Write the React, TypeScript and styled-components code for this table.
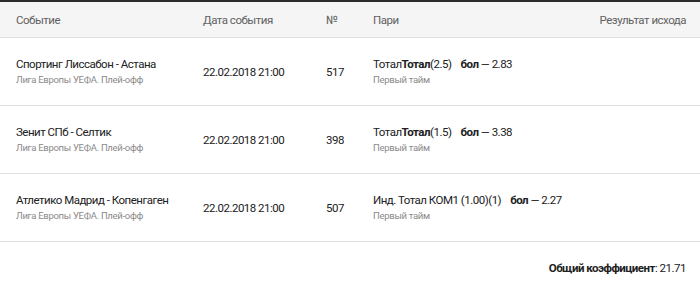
import styled, { createGlobalStyle } from 'styled-components'

const GlobalStyle = createGlobalStyle`
  html, body {
    margin: 0;
    padding: 0;
    background: #ffffff;
  }
  body {
    font-family: Roboto, 'Liberation Sans', Arial, sans-serif;
    color: #212121;
  }
`

interface Bet {
  title: string
  league: string
  date: string
  num: string
  market: React.ReactNode
  odds: string
}

const BETS: Bet[] = [
  {
    title: 'Спортинг Лиссабон - Астана',
    league: 'Лига Европы УЕФА. Плей-офф',
    date: '22.02.2018 21:00',
    num: '517',
    market: (
      <>
        Тотал<b>Тотал</b>(2.5)
      </>
    ),
    odds: '2.83'
  },
  {
    title: 'Зенит СПб - Селтик',
    league: 'Лига Европы УЕФА. Плей-офф',
    date: '22.02.2018 21:00',
    num: '398',
    market: (
      <>
        Тотал<b>Тотал</b>(1.5)
      </>
    ),
    odds: '3.38'
  },
  {
    title: 'Атлетико Мадрид - Копенгаген',
    league: 'Лига Европы УЕФА. Плей-офф',
    date: '22.02.2018 21:00',
    num: '507',
    market: <>Инд. Тотал КОМ1 (1.00)(1)</>,
    odds: '2.27'
  }
]

export default function App() {
  return (
    <Page>
      <GlobalStyle />
      <HeaderRow>
        <HeadCell>Событие</HeadCell>
        <HeadCell>Дата события</HeadCell>
        <HeadCell>№</HeadCell>
        <HeadCell>Пари</HeadCell>
        <HeadCell $right>Результат исхода</HeadCell>
      </HeaderRow>
      {BETS.map(bet => (
        <Row key={bet.num}>
          <Cell>
            <Title>{bet.title}</Title>
            <Sub>{bet.league}</Sub>
          </Cell>
          <Plain>{bet.date}</Plain>
          <Plain>{bet.num}</Plain>
          <Cell>
            <Title>
              {bet.market}
              <Outcome>
                <b>бол</b> — {bet.odds}
              </Outcome>
            </Title>
            <Sub>Первый тайм</Sub>
          </Cell>
          <Cell />
        </Row>
      ))}
      <Footer>
        <b>Общий коэффициент</b>: 21.71
      </Footer>
    </Page>
  )
}

const Page = styled.div`
  width: 700px;
  border-top: 2px solid #2b2b2b;
`

const HeaderRow = styled.div`
  display: grid;
  grid-template-columns: 187px 123px 47px 1fr auto;
  align-items: center;
  height: 34px;
  padding: 1px 14px 0 16px;
  background: #f5f5f5;
  border-bottom: 1px solid #e0e0e0;
`

const HeadCell = styled.div<{ $right?: boolean }>`
  font-size: 11.5px;
  letter-spacing: -0.5px;
  color: #616161;
  text-align: ${props => (props.$right ? 'right' : 'left')};
`

const Row = styled.div`
  display: grid;
  grid-template-columns: 187px 123px 47px 1fr auto;
  align-items: center;
  height: 67px;
  padding: 0 14px 0 16px;
  border-bottom: 1px solid #e0e0e0;
`

const Cell = styled.div`
  display: flex;
  flex-direction: column;
  gap: 1px;
`

const Title = styled.div`
  font-size: 11.5px;
  letter-spacing: -0.5px;
  line-height: 15px;
  color: #212121;

  b {
    font-weight: 700;
  }
`

const Outcome = styled.span`
  margin-left: 9px;
`

const Sub = styled.div`
  font-size: 9.5px;
  letter-spacing: -0.3px;
  line-height: 13px;
  color: #8a8a8a;
`

const Plain = styled.div`
  font-size: 11.5px;
  letter-spacing: -0.5px;
  color: #212121;
`

const Footer = styled.div`
  padding: 19px 14px 0 0;
  text-align: right;
  font-size: 11.5px;
  letter-spacing: -0.5px;
  color: #212121;

  b {
    font-weight: 700;
  }
`
